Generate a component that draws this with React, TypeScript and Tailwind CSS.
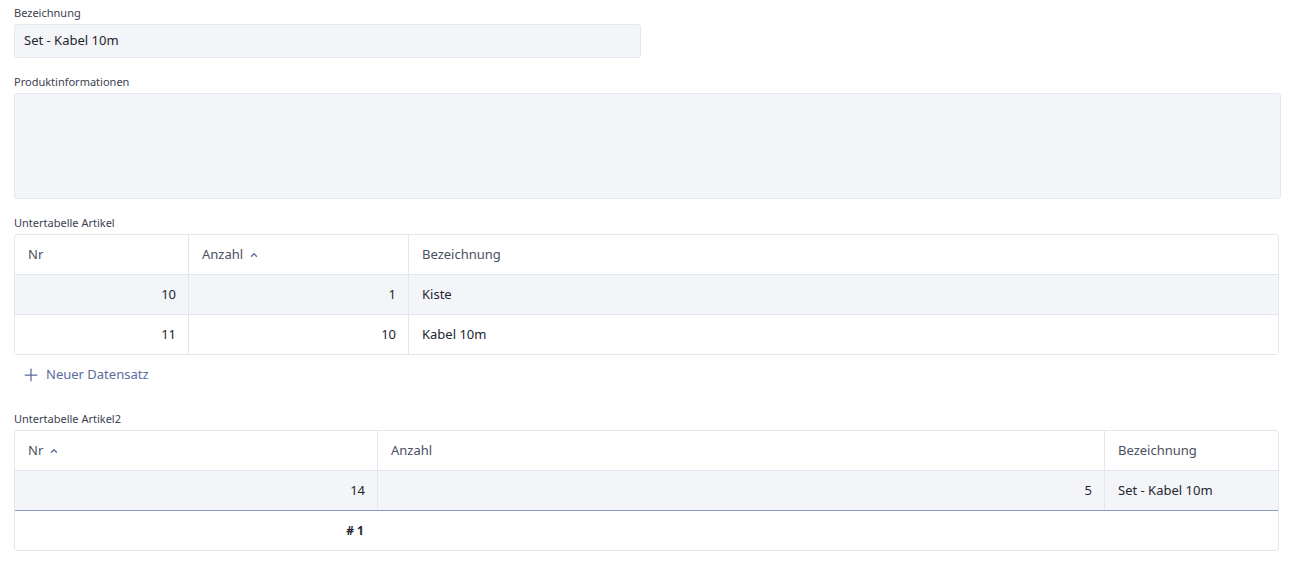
import { Plus } from 'lucide-react';

const font = { fontFamily: '"Noto Sans", "Open Sans", sans-serif' };

function SortUp() {
    return (
        <svg className="ml-[7px] h-[8px] w-[8px] text-[#5b6b9e]" viewBox="0 0 8 8" fill="none">
            <path d="M1.5 5.2 L4 2.8 L6.5 5.2" stroke="currentColor" strokeWidth="1.3" strokeLinecap="round" strokeLinejoin="round" />
        </svg>
    );
}

function Label({ children }: { children: string }) {
    return <div className="h-[16px] leading-[16px] text-[11px] text-[#3c4150] mb-[3px]">{children}</div>;
}

interface Col {
    title: string;
    width: string;
    sorted?: boolean;
    numeric?: boolean;
}

interface TableProps {
    cols: Col[];
    rows: string[][];
    highlighted?: number;
    footer?: string;
}

function SubTable({ cols, rows, highlighted, footer }: TableProps) {
    return (
        <div className="mr-[2px] rounded-[3px] border border-[#e4e6ee] text-[13px]">
            <div className="flex h-[40px] border-b border-[#e4e6ee]">
                {cols.map((c, i) => (
                    <div
                        key={c.title}
                        className={`${c.width} flex items-center px-[13px] text-[#4b5062] ${i > 0 ? 'border-l border-[#e4e6ee]' : ''}`}
                    >
                        {c.title}
                        {c.sorted && <SortUp />}
                    </div>
                ))}
            </div>
            {rows.map((r, ri) => {
                const last = ri === rows.length - 1;
                return (
                    <div
                        key={ri}
                        className={`flex ${last ? 'h-[39px]' : 'h-[40px] border-b border-[#e4e6ee]'} ${ri === highlighted ? 'bg-[#f4f5f9]' : 'bg-white'}`}
                    >
                        {cols.map((c, i) => (
                            <div
                                key={c.title}
                                className={`${c.width} flex items-center text-[#23262f] ${c.numeric ? 'justify-end pr-[12px] pl-[13px]' : 'px-[13px]'} ${i > 0 ? 'border-l border-[#e4e6ee]' : ''}`}
                            >
                                {r[i]}
                            </div>
                        ))}
                    </div>
                );
            })}
            {footer && (
                <div className="flex h-[40px] border-t border-[#8b9dc7]">
                    <div className={`${cols[0].width} flex items-center justify-end pr-[13px] font-bold text-[12px] text-[#23262f]`}>{footer}</div>
                </div>
            )}
        </div>
    );
}

export default function App() {
    return (
        <div className="min-h-[562px] bg-white pl-[14px] pr-[9px] pt-[5px]" style={font}>
            <Label>Bezeichnung</Label>
            <div className="flex h-[34px] w-[627px] items-center rounded-[3px] border border-[#e6e8ef] bg-[#f4f5f9] px-[9px] text-[13px] text-[#23262f]">
                Set - Kabel 10m
            </div>

            <div className="mt-[16px]">
                <Label>Produktinformationen</Label>
                <div className="h-[106px] rounded-[3px] border border-[#e6e8ef] bg-[#f4f5f9]" />
            </div>

            <div className="mt-[16px]">
                <Label>Untertabelle Artikel</Label>
                <SubTable
                    cols={[
                        { title: 'Nr', width: 'w-[173px]', numeric: true },
                        { title: 'Anzahl', width: 'w-[220px]', sorted: true, numeric: true },
                        { title: 'Bezeichnung', width: 'flex-1' },
                    ]}
                    rows={[
                        ['10', '1', 'Kiste'],
                        ['11', '10', 'Kabel 10m'],
                    ]}
                    highlighted={0}
                />
                <button className="flex h-[40px] items-center pl-[7px] text-[13px] text-[#5b6b9e]">
                    <Plus className="mr-[5px] h-[20px] w-[20px]" strokeWidth={1.5} />
                    Neuer Datensatz
                </button>
            </div>

            <div className="mt-[16px]">
                <Label>Untertabelle Artikel2</Label>
                <SubTable
                    cols={[
                        { title: 'Nr', width: 'w-[362px]', sorted: true, numeric: true },
                        { title: 'Anzahl', width: 'w-[727px]', numeric: true },
                        { title: 'Bezeichnung', width: 'flex-1' },
                    ]}
                    rows={[['14', '5', 'Set - Kabel 10m']]}
                    highlighted={0}
                    footer="# 1"
                />
            </div>
        </div>
    );
}
